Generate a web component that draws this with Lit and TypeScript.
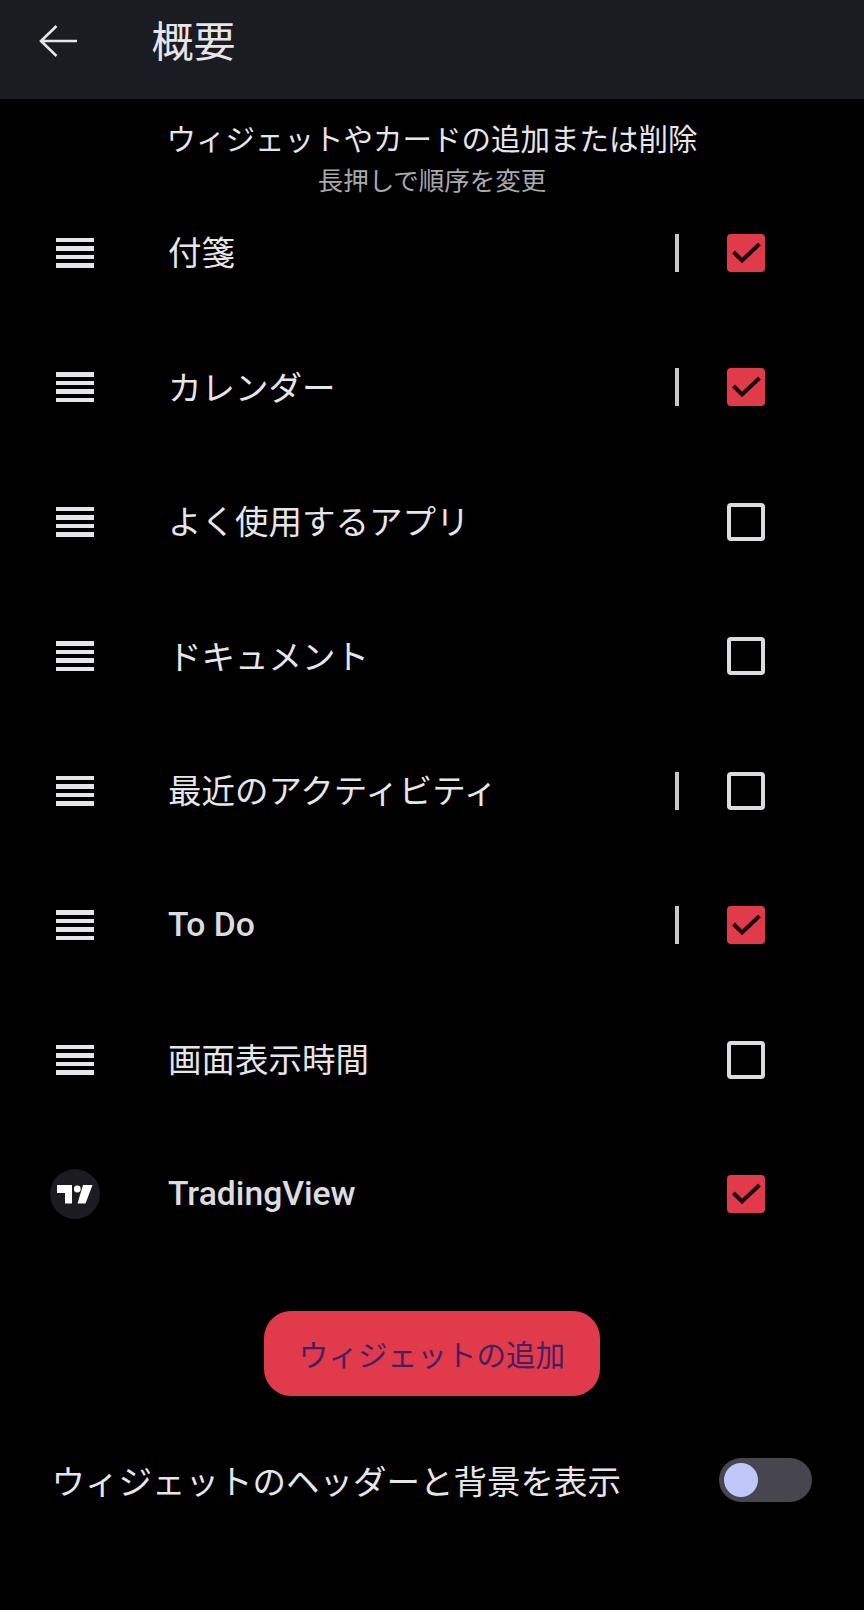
import { LitElement, html, css, svg } from 'lit';
import { customElement } from 'lit/decorators.js';
import { classMap } from 'lit/directives/class-map.js';

interface Row {
  label: string;
  checked: boolean;
  divider: boolean;
  latin?: boolean;
  logo?: boolean;
}

const rows: Row[] = [
  { label: '付箋', checked: true, divider: true },
  { label: 'カレンダー', checked: true, divider: true },
  { label: 'よく使用するアプリ', checked: false, divider: false },
  { label: 'ドキュメント', checked: false, divider: false },
  { label: '最近のアクティビティ', checked: false, divider: true },
  { label: 'To Do', checked: true, divider: true, latin: true },
  { label: '画面表示時間', checked: false, divider: false },
  { label: 'TradingView', checked: true, divider: false, latin: true, logo: true },
];

const backIcon = svg`<path d="M39 17H3M18.5 2 3 17l15.5 15" fill="none" stroke="#e6e6ea" stroke-width="2.6"/>`;
const checkIcon = svg`<path d="M6.5 18l8.5 8.5L32.5 10" fill="none" stroke="#1a0508" stroke-width="4"/>`;
const tvLogo = svg`<path d="M0 0h15v18.5H8V8H0zM26 0h9.5l-7 18.5h-8z" fill="#fff"/><circle cx="20.3" cy="4" r="3.4" fill="#fff"/>`;

@customElement('app-root')
export class AppRoot extends LitElement {
  static styles = css`
    :host {
      display: block;
      width: 864px;
      height: 1610px;
      background: #000;
      color: #e6e6ea;
      font-family: Roboto, 'Noto Sans CJK JP', sans-serif;
      overflow: hidden;
    }

    .header {
      height: 99px;
      box-sizing: border-box;
      background: #1b1b22;
      display: flex;
      align-items: center;
      padding: 0 0 13px 38px;
    }

    .back {
      width: 40px;
      height: 34px;
      flex: none;
      margin-bottom: 4px;
    }

    .title {
      margin-left: 73.5px;
      font-size: 42px;
      line-height: 50px;
    }

    .intro {
      text-align: center;
      padding-top: 21px;
    }

    .intro-main {
      font-size: 29.5px;
      line-height: 40px;
    }

    .intro-sub {
      font-size: 25.5px;
      line-height: 40px;
      color: #a9a9ae;
      margin-top: 1px;
    }

    .list {
      margin-top: -15.5px;
    }

    .row {
      height: 134.5px;
      box-sizing: border-box;
      display: flex;
      align-items: center;
      padding-left: 50px;
    }

    .handle-cell {
      width: 50px;
      flex: none;
      display: flex;
      justify-content: center;
      margin-right: 68px;
    }

    .handle {
      width: 38px;
      display: flex;
      flex-direction: column;
      gap: 4px;
    }

    .handle span {
      height: 4.5px;
      background: #e6e6ea;
    }

    .logo {
      width: 50px;
      height: 50px;
      border-radius: 50%;
      background: #1b1b21;
      display: flex;
      align-items: center;
      justify-content: center;
    }

    .logo svg {
      width: 36px;
      height: 19px;
    }

    .label {
      flex: 1;
      font-size: 33.5px;
      line-height: 44px;
      padding-top: 3px;
    }

    .label.latin {
      font-size: 33.7px;
      font-weight: 500;
      color: #dcdce0;
      padding-top: 0;
    }

    .divider {
      width: 4px;
      height: 38px;
      background: #c8c8cc;
      margin-right: 48px;
    }

    .box {
      width: 38px;
      height: 38px;
      box-sizing: border-box;
      border-radius: 4px;
      border: 4px solid #dcdce0;
      margin-right: 99px;
      flex: none;
    }

    .box.on {
      border: none;
      background: #e13a4b;
    }

    .box svg {
      display: block;
      width: 38px;
      height: 38px;
    }

    .actions {
      display: flex;
      justify-content: center;
      margin-top: 49.5px;
    }

    .add {
      width: 336px;
      height: 85px;
      border: none;
      border-radius: 27px;
      background: #e13a4b;
      color: #452060;
      font: inherit;
      font-size: 29.6px;
      padding: 0;
    }

    .footer {
      display: flex;
      align-items: center;
      justify-content: space-between;
      margin-top: 58.5px;
      padding: 0 52px 0 51.5px;
    }

    .footer-label {
      font-size: 33.5px;
      line-height: 44px;
      padding-top: 6px;
    }

    .toggle {
      width: 93px;
      height: 44px;
      box-sizing: border-box;
      border-radius: 22px;
      background: #47464e;
      display: flex;
      align-items: center;
      padding-left: 5px;
    }

    .thumb {
      width: 34px;
      height: 34px;
      border-radius: 50%;
      background: #c0c8fa;
    }
  `;

  private renderRow(row: Row) {
    return html`
      <div class="row">
        <div class="handle-cell">
          ${row.logo
            ? html`<div class="logo"><svg viewBox="0 0 36 19">${tvLogo}</svg></div>`
            : html`<div class="handle"><span></span><span></span><span></span><span></span></div>`}
        </div>
        <div class=${classMap({ label: true, latin: !!row.latin })}>${row.label}</div>
        ${row.divider ? html`<div class="divider"></div>` : ''}
        <div class=${classMap({ box: true, on: row.checked })}>
          ${row.checked ? html`<svg viewBox="0 0 38 38">${checkIcon}</svg>` : ''}
        </div>
      </div>
    `;
  }

  render() {
    return html`
      <div class="header">
        <svg class="back" viewBox="0 0 40 34">${backIcon}</svg>
        <div class="title">概要</div>
      </div>
      <div class="intro">
        <div class="intro-main">ウィジェットやカードの追加または削除</div>
        <div class="intro-sub">長押しで順序を変更</div>
      </div>
      <div class="list">${rows.map((row) => this.renderRow(row))}</div>
      <div class="actions"><button class="add">ウィジェットの追加</button></div>
      <div class="footer">
        <div class="footer-label">ウィジェットのヘッダーと背景を表示</div>
        <div class="toggle"><div class="thumb"></div></div>
      </div>
    `;
  }
}
